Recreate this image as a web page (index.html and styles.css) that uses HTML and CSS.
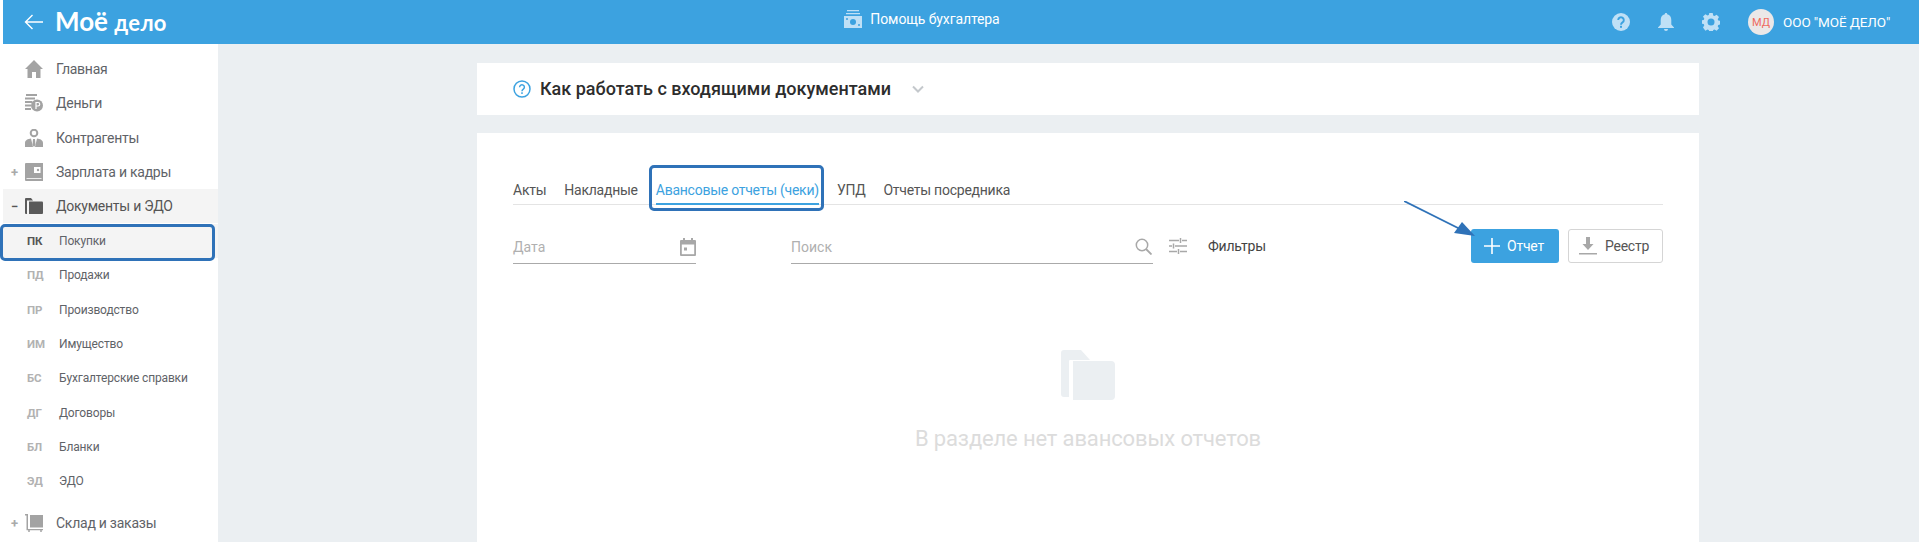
FILE: index.html
```html
<!DOCTYPE html>
<html lang="ru">
<head>
<meta charset="utf-8">
<title>Моё дело</title>
<link rel="stylesheet" href="styles.css">
</head>
<body>
<div class="app">
  <header class="topbar">
    <div class="brand">
      <svg class="back" width="20" height="16" viewBox="0 0 20 16"><path d="M19 8H1.500M8.500 1 1.500 8l7 7" fill="none" stroke="#fff" stroke-width="1.400"/></svg>
      <span class="logo">Моё <span class="logo-small">дело</span></span>
    </div>
    <div class="help">
      <svg width="18" height="18" viewBox="0 0 18 18"><path d="M3 0h12v1.300H3zM2 3h14v1.300H2z" fill="#bfe0f6"/><path d="M0 6h18v12H0z" fill="#bfe0f6"/><circle cx="9" cy="12" r="3" fill="#3ca2e0"/><circle cx="3" cy="9" r="1" fill="#3ca2e0"/><circle cx="15" cy="15" r="1" fill="#3ca2e0"/></svg>
      <span>Помощь бухгалтера</span>
    </div>
    <div class="tools">
      <svg class="tool" width="18" height="18" viewBox="0 0 18 18"><circle cx="9" cy="9" r="9" fill="#bfe0f6"/><path d="M6.200 7a2.800 2.800 0 1 1 4.300 2.400c-1 .7-1.500 1.100-1.500 2.300" fill="none" stroke="#3ca2e0" stroke-width="1.900"/><rect x="8" y="12.800" width="2" height="2" fill="#3ca2e0"/></svg>
      <svg class="tool" width="16" height="18" viewBox="0 0 16 18"><path d="M8 0c.8 0 1.200.5 1.200 1.300C12 2 13.300 4.300 13.300 7v4.500L16 14.500V15H0v-.5l2.700-3V7c0-2.700 1.300-5 4.100-5.700C6.800.5 7.200 0 8 0zM6 16h4a2 2 0 0 1-4 0z" fill="#bfe0f6"/></svg>
      <svg class="tool" width="18" height="18" viewBox="0 0 18 18"><path d="M7.300 0h3.400l.5 2.400 1.300.6 2.100-1.300 2.400 2.400-1.300 2.100.6 1.300 2.400.5v3.400l-2.400.5-.6 1.300 1.300 2.100-2.400 2.400-2.100-1.300-1.300.6-.5 2.400H7.300l-.5-2.400-1.300-.6-2.100 1.300L1 14.400l1.300-2.100-.6-1.300L-.7 10.500V7.500l2.400-.5.6-1.300L1 3.600l2.400-2.400 2.100 1.300 1.300-.6z" fill="#bfe0f6"/><circle cx="9" cy="9" r="3.500" fill="#3ca2e0"/></svg>
      <div class="org">
        <span class="avatar">МД</span>
        <span class="org-name">ООО "МОЁ ДЕЛО"</span>
      </div>
    </div>
  </header>
  <div class="body">
    <nav class="side">
      <a class="item">
        <span class="sign"></span>
        <svg class="ico" width="18" height="18" viewBox="0 0 18 18"><path d="M9 0 18 9h-2.500v9H11v-6H7v6H2.500V9H0z" fill="#a3a3a3"/></svg>
        <span>Главная</span>
      </a>
      <a class="item">
        <span class="sign"></span>
        <svg class="ico" width="18" height="18" viewBox="0 0 18 18"><path d="M1 0h11v2H1zM0 3.500h10v2H0zM0 7h7v2H0zM0 10.500h6v2H0zM0 14h6v2H0z" fill="#a3a3a3"/><circle cx="12" cy="11.500" r="6" fill="#a3a3a3"/><path d="M11 15V8.500h2a1.700 1.700 0 0 1 0 3.500h-2" fill="none" stroke="#fff" stroke-width="1.200"/></svg>
        <span>Деньги</span>
      </a>
      <a class="item">
        <span class="sign"></span>
        <svg class="ico" width="18" height="18" viewBox="0 0 18 18"><circle cx="9" cy="4" r="3.300" fill="none" stroke="#a3a3a3" stroke-width="2"/><path d="M0 18v-4c0-3 3-4 6-4.500L8 18zM18 18v-4c0-3-3-4-6-4.500L10 18z" fill="#a3a3a3"/><path d="M8 10h2l.5 6-1.500 2-1.500-2z" fill="#a3a3a3"/></svg>
        <span>Контрагенты</span>
      </a>
      <a class="item">
        <span class="sign">+</span>
        <svg class="ico" width="18" height="18" viewBox="0 0 18 18"><path d="M1 0h17v18H1a1 1 0 0 1-1-1V1a1 1 0 0 1 1-1z" fill="#a3a3a3"/><path d="M1.500 15.500h15" stroke="#fff" stroke-width=".8"/><path d="M9 4h6.500v6H9z" fill="#fff"/><circle cx="13" cy="7" r="1.200" fill="#a3a3a3"/></svg>
        <span>Зарплата и кадры</span>
      </a>
      <a class="item item-open">
        <span class="sign sign-dark">−</span>
        <svg class="ico" width="18" height="16" viewBox="0 0 18 16"><path d="M1 0h5l2 2.500H2V16H1a1 1 0 0 1-1-1V1a1 1 0 0 1 1-1z" fill="#5a5a5a"/><path d="M4 3.500h13a1 1 0 0 1 1 1V15a1 1 0 0 1-1 1H4z" fill="#5a5a5a"/></svg>
        <span>Документы и ЭДО</span>
      </a>
      <ul class="sub">
        <li class="sub-item sub-active marked"><b>ПК</b><span>Покупки</span></li>
        <li class="sub-item"><b>ПД</b><span>Продажи</span></li>
        <li class="sub-item"><b>ПР</b><span>Производство</span></li>
        <li class="sub-item"><b>ИМ</b><span>Имущество</span></li>
        <li class="sub-item"><b>БС</b><span>Бухгалтерские справки</span></li>
        <li class="sub-item"><b>ДГ</b><span>Договоры</span></li>
        <li class="sub-item"><b>БЛ</b><span>Бланки</span></li>
        <li class="sub-item"><b>ЭД</b><span>ЭДО</span></li>
      </ul>
      <a class="item">
        <span class="sign">+</span>
        <svg class="ico" width="18" height="18" viewBox="0 0 18 18"><path d="M0 0h3v15h15v1.200H1.500V1.500H0z" fill="#a3a3a3"/><path d="M5 1h13v12.500H5z" fill="#a3a3a3"/><circle cx="4" cy="17" r="1" fill="#a3a3a3"/><circle cx="16" cy="17" r="1" fill="#a3a3a3"/></svg>
        <span>Склад и заказы</span>
      </a>
    </nav>
    <main class="main">
      <section class="card guide">
        <svg width="18" height="18" viewBox="0 0 18 18"><circle cx="9" cy="9" r="8" fill="none" stroke="#3ca2e0" stroke-width="1.500"/><path d="M6.600 7.200a2.400 2.400 0 1 1 3.700 2c-.9.600-1.300 1-1.300 2" fill="none" stroke="#3ca2e0" stroke-width="1.500"/><rect x="8.200" y="12.300" width="1.600" height="1.600" fill="#3ca2e0"/></svg>
        <h1>Как работать с входящими документами</h1>
        <svg class="chev" width="12" height="8" viewBox="0 0 12 8"><path d="M1 1.500 6 6.500l5-5" fill="none" stroke="#c4c8cc" stroke-width="2"/></svg>
      </section>
      <section class="card content">
        <div class="tabs">
          <span class="tab">Акты</span>
          <span class="tab">Накладные</span>
          <span class="tab tab-active marked">Авансовые отчеты (чеки)</span>
          <span class="tab">УПД</span>
          <span class="tab">Отчеты посредника</span>
        </div>
        <div class="filters">
          <div class="field field-date">
            <span>Дата</span>
            <svg width="16" height="18" viewBox="0 0 16 18"><path d="M3 0h2v2h6V0h2v2h2a1 1 0 0 1 1 1v14a1 1 0 0 1-1 1H1a1 1 0 0 1-1-1V3a1 1 0 0 1 1-1h2z" fill="#a8a8a8"/><path d="M1.800 6.500h12.400v9.700H1.800z" fill="#fff"/><rect x="4" y="9.500" width="3" height="3" fill="#a8a8a8"/></svg>
          </div>
          <div class="field field-search">
            <span>Поиск</span>
            <svg width="17" height="17" viewBox="0 0 17 17"><circle cx="7" cy="7" r="5.700" fill="none" stroke="#a8a8a8" stroke-width="1.500"/><path d="m11 11 5.500 5.500" stroke="#a8a8a8" stroke-width="1.800"/></svg>
          </div>
          <svg class="tune" width="18" height="16" viewBox="0 0 18 16"><path d="M0 2.500h10M13 2.500h5M0 8h3M6 8h12M0 13.500h8M11 13.500h7M11.500 0v5M4.500 5.500v5M9.500 11v5" stroke="#a8a8a8" stroke-width="1.500" fill="none"/></svg>
          <span class="filter-label">Фильтры</span>
          <button class="btn btn-primary" type="button">
            <svg width="16" height="16" viewBox="0 0 16 16"><path d="M8 0v16M0 8h16" stroke="#fff" stroke-width="1.600"/></svg>
            Отчет
          </button>
          <button class="btn btn-plain" type="button">
            <svg width="18" height="18" viewBox="0 0 18 18"><path d="M7 0h4v7h3.500L9 13 3.500 7H7z" fill="#a8a8a8"/><rect y="16" width="18" height="1.500" fill="#a8a8a8"/></svg>
            Реестр
          </button>
        </div>
        <div class="empty">
          <svg width="54" height="50" viewBox="0 0 54 50"><path d="M3 0h17l9 10H9a1 1 0 0 0-1 1v36h-5a3 3 0 0 1-3-3V3a3 3 0 0 1 3-3z" fill="#ebeff2"/><path d="M12 11h38a4 4 0 0 1 4 4v31a4 4 0 0 1-4 4H12z" fill="#ebeff2"/></svg>
          <p>В разделе нет авансовых отчетов</p>
        </div>
      </section>
    </main>
  </div>
  <svg class="pointer" width="72" height="36" viewBox="0 0 72 36"><path d="M0 0 60 30" stroke="#2f72b8" stroke-width="1.800"/><path d="M71 35 50 32 58 21z" fill="#2f72b8"/></svg>
</div>
</body>
</html>
```
FILE: styles.css
```css
* { box-sizing: border-box; }
html, body { margin: 0; padding: 0; height: 100%; overflow: hidden; background: #fff; }
body { font-family: Roboto, "Liberation Sans", sans-serif; font-size: 14px; color: #555; }
.app { position: relative; height: 542px; padding-left: 3px; display: flex; flex-direction: column; }

.topbar { height: 44px; flex: none; background: #3ca2e0; display: flex; align-items: center; position: relative; color: #fff; }
.brand { display: flex; align-items: center; gap: 11px; padding-left: 21px; width: 400px; }
.logo { font-family: Lato, "Noto Sans", sans-serif; font-weight: 700; font-size: 26px; line-height: 44px; white-space: nowrap; }
.logo-small { font-size: 22px; letter-spacing: .3px; }
.help { flex: 1; display: flex; align-items: center; justify-content: center; gap: 8px; font-size: 14px; letter-spacing: -.1px; padding-right: 103px; height: 44px; padding-bottom: 7px; }
.tools { display: flex; align-items: center; width: 375px; padding-left: 68px; }
.tool { margin-right: 28px; flex: none; }
.org { display: flex; align-items: center; gap: 9px; }
.avatar { width: 26px; height: 26px; border-radius: 50%; background: #ebe8e8; color: #ee6a5d; font-size: 11px; display: flex; align-items: center; justify-content: center; }
.org-name { font-size: 13.500px; letter-spacing: -.1px; white-space: nowrap; }

.body { flex: 1; display: flex; min-height: 0; }
.side { width: 215px; flex: none; padding-top: 8px; background: #fff; }
.item { height: 34.300px; display: flex; align-items: center; color: #5f6368; font-size: 14px; letter-spacing: -.25px; }
.item-open { background: #f4f4f4; color: #555; }
.sign { width: 22px; padding-left: 8px; flex: none; color: #aaa; font-size: 13px; font-weight: 700; line-height: 1; }
.sign-dark { color: #555; }
.ico { margin-right: 13px; flex: none; width: 18px; }
.sub { list-style: none; margin: .5px 0 7.500px; padding: 0; }
.sub-item { height: 34.300px; display: flex; align-items: center; font-size: 12px; letter-spacing: -.15px; color: #5f6368; padding-left: 24px; }
.sub-item b { width: 32px; color: #b2b2b2; font-size: 11.500px; font-weight: 700; flex: none; }
.sub-active { background: #f4f4f4; }
.sub-active b { color: #555; }
.marked { position: relative; }
.marked::after { content: ""; position: absolute; border: 3px solid #2f72b8; border-radius: 5px; pointer-events: none; }
.sub-item.marked::after { left: -3px; top: 0; right: 3px; bottom: -3px; }
.tab.marked::after { left: -7px; right: -5px; top: -16px; bottom: -8px; }

.main { flex: 1; background: #ebeff2; padding: 19px 220px 0 259px; display: flex; flex-direction: column; gap: 18px; min-width: 0; }
.card { background: #fff; }
.guide { height: 52px; flex: none; display: flex; align-items: center; padding: 0 36px; gap: 9px; }
.guide h1 { margin: 0; font-size: 18px; font-weight: 500; color: #2d2d2d; line-height: 1; }
.chev { margin-left: 12px; }
.content { flex: 1; padding: 46px 36px 0; display: flex; flex-direction: column; }
.tabs { display: flex; gap: 18px; border-bottom: 1px solid #e4e4e4; height: 26px; padding-top: 2px; align-items: flex-start; }
.tab { color: #555; font-size: 14px; letter-spacing: -.25px; height: 24px; line-height: 18px; white-space: nowrap; }
.tab-active { color: #3ca2e0; border-bottom: 2px solid #3ca2e0; }

.filters { display: flex; align-items: center; margin-top: 24px; height: 34px; }
.field { height: 36px; padding-top: 2px; display: flex; align-items: center; justify-content: space-between; border-bottom: 1px solid #aaa; color: #b0b0b0; font-size: 14px; flex: none; }
.field-date { width: 183px; }
.field-search { width: 362px; margin-left: 95px; padding-right: 1px; }
.tune { margin-left: 16px; flex: none; }
.filter-label { margin-left: 21px; font-size: 14px; letter-spacing: -.25px; color: #444; flex: 1; }
.btn { font-family: inherit; font-size: 14px; letter-spacing: -.25px; height: 34px; border-radius: 3px; display: flex; align-items: center; justify-content: center; padding: 0; }
.btn-primary { width: 88px; background: #3ca2e0; color: #fff; border: 0; gap: 7px; padding-right: 2px; }
.btn-plain { width: 95px; margin-left: 9px; background: #fff; color: #555; border: 1px solid #d5d5d5; gap: 8px; padding-right: 3px; }

.empty { display: flex; flex-direction: column; align-items: center; margin-top: 86px; }
.empty svg { height: 52px; }
.empty p { margin: 25px 0 0; font-size: 22px; letter-spacing: -.15px; color: #dcdcdc; line-height: 26px; }

.pointer { position: absolute; left: 1404px; top: 201px; }
```
